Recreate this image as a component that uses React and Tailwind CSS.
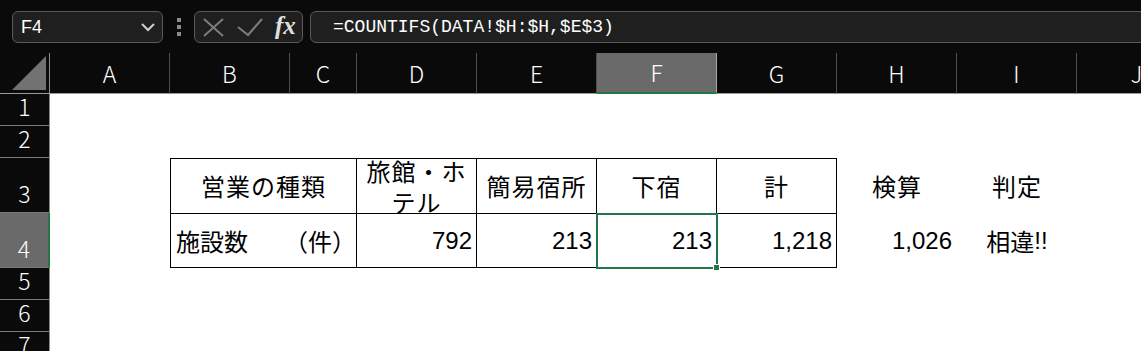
import React from 'react';

const cols = ['A', 'B', 'C', 'D', 'E', 'F', 'G', 'H', 'I', 'J'];
const rows = [1, 2, 3, 4, 5, 6, 7];

const colStart = [
    'col-start-2', 'col-start-3', 'col-start-4', 'col-start-5', 'col-start-6',
    'col-start-7', 'col-start-8', 'col-start-9', 'col-start-10', 'col-start-11',
];
const rowStart = ['row-start-2', 'row-start-3', 'row-start-4', 'row-start-5', 'row-start-6', 'row-start-7', 'row-start-8'];

const jp = { fontFamily: '"Noto Sans CJK JP", "Liberation Sans", sans-serif' };

function FormulaBar() {
    return (
        <div className="h-[53px] flex items-start pt-[11px] pl-[12px]">
            <div className="shrink-0 w-[151px] h-[32px] rounded-[6px] border border-[#5a5a5a] bg-[#1f1f1f] flex items-center justify-between pl-[8px] pr-[6px]">
                <span className="text-[18px] text-white font-['Liberation_Sans'] leading-none">F4</span>
                <svg width="16" height="10" viewBox="0 0 16 10">
                    <path d="M2 2 L8 8 L14 2" fill="none" stroke="#d0d0d0" strokeWidth="2" />
                </svg>
            </div>
            <div className="shrink-0 w-[31px] h-[32px] flex flex-col items-center justify-center gap-[3px]">
                <div className="w-[4px] h-[4px] bg-[#8a8a8a]" />
                <div className="w-[4px] h-[4px] bg-[#8a8a8a]" />
                <div className="w-[4px] h-[4px] bg-[#8a8a8a]" />
            </div>
            <div className="shrink-0 w-[109px] h-[32px] rounded-[6px] border border-[#5a5a5a] bg-[#1f1f1f] flex items-center">
                <svg width="80" height="32" viewBox="0 0 80 32" className="shrink-0">
                    <path d="M9 8 L28 25 M28 8 L9 25" stroke="#7c7c7c" strokeWidth="2" fill="none" />
                    <path d="M43 16 L53 24 L67 8" stroke="#7c7c7c" strokeWidth="2" fill="none" />
                </svg>
                <span className="text-[25px] italic text-[#e0e0e0] font-['Liberation_Serif'] font-bold leading-none -mt-[3px]">fx</span>
            </div>
            <div className="shrink-0 ml-[7px] w-[900px] h-[32px] rounded-[6px] border border-[#5a5a5a] bg-[#1f1f1f] flex items-center pl-[22px]">
                <span className="text-[18px] text-white font-['Liberation_Mono'] leading-none">=COUNTIFS(DATA!$H:$H,$E$3)</span>
            </div>
        </div>
    );
}

function Sheet() {
    return (
        <div className="grid grid-cols-[50px_120px_120px_67px_120px_120px_120px_120px_120px_120px_120px] grid-rows-[41px_32px_32px_55px_55px_32px_32px_32px]">
            {/* corner */}
            <div className="col-start-1 row-start-1 border-b border-b-[#9a9a9a] border-r border-r-[#8a8a8a] flex items-end justify-end pr-[2px] pb-[2px]">
                <svg width="36" height="36" viewBox="0 0 36 36">
                    <path d="M1 35 L35 35 L35 1 Z" fill="#727272" />
                </svg>
            </div>

            {/* column headers */}
            {cols.map((c, i) => (
                <div
                    key={c}
                    className={`${colStart[i]} row-start-1 flex items-center justify-center text-[23px] font-light text-white ${
                        c === 'F'
                            ? 'bg-[#6a6a6a] border-r border-r-[#a8a8a8] border-b-2 border-b-[#21794a]'
                            : 'border-r border-r-[#4e4e4e] border-b border-b-[#9a9a9a]'
                    }`}
                    style={jp}
                >
                    {c}
                </div>
            ))}

            {/* row headers */}
            {rows.map((r, i) => (
                <div
                    key={r}
                    className={`col-start-1 ${rowStart[i]} flex items-end justify-center pb-[7px] text-[23px] font-light text-white leading-none border-b border-b-[#7a7a7a] ${
                        r === 4 ? 'bg-[#6a6a6a] border-r-2 border-r-[#21794a]' : 'border-r border-r-[#8a8a8a]'
                    }`}
                    style={jp}
                >
                    {r}
                </div>
            ))}

            {/* cell area */}
            <div className="col-start-2 col-span-10 row-start-2 row-span-7 bg-white" />

            {/* row 3 */}
            <div className="col-start-3 col-span-2 row-start-4 border-l border-t border-r border-black flex items-center justify-center text-[24px] tracking-[1px] text-black" style={jp}>
                営業の種類
            </div>
            <div className="col-start-5 row-start-4 border-t border-r border-black flex items-center justify-center text-center text-[24px] leading-[31px] tracking-[1px] text-black px-[3px]" style={jp}>
                旅館・ホテル
            </div>
            <div className="col-start-6 row-start-4 border-t border-r border-black flex items-center justify-center text-[24px] tracking-[1px] text-black" style={jp}>
                簡易宿所
            </div>
            <div className="col-start-7 row-start-4 border-t border-r border-black flex items-center justify-center text-[24px] tracking-[1px] text-black" style={jp}>
                下宿
            </div>
            <div className="col-start-8 row-start-4 border-t border-r border-black flex items-center justify-center text-[24px] tracking-[1px] text-black" style={jp}>
                計
            </div>
            <div className="col-start-9 row-start-4 flex items-center justify-center text-[24px] tracking-[1px] text-black" style={jp}>
                検算
            </div>
            <div className="col-start-10 row-start-4 flex items-center justify-center text-[24px] tracking-[1px] text-black" style={jp}>
                判定
            </div>

            {/* row 4 */}
            <div className="col-start-3 col-span-2 row-start-5 border-l border-t border-b border-r border-black flex items-center justify-between pl-[5px] pr-[0px] text-[24px] text-black" style={jp}>
                <span>施設数</span>
                <span>（件）</span>
            </div>
            <div className="col-start-5 row-start-5 border-t border-b border-r border-black flex items-center justify-end pr-[4px] text-[24px] text-black font-['Liberation_Sans']">
                792
            </div>
            <div className="col-start-6 row-start-5 border-t border-b border-r border-black flex items-center justify-end pr-[4px] text-[24px] text-black font-['Liberation_Sans']">
                213
            </div>
            <div className="col-start-7 row-start-5 relative border-t border-b border-r border-black flex items-center justify-end pr-[4px] text-[24px] text-black font-['Liberation_Sans']">
                213
                <div className="absolute -left-[1px] -top-[1px] -right-[2px] -bottom-[2px] border-2 border-[#21794a]" />
                <div className="absolute -right-[4px] -bottom-[4px] w-[7px] h-[7px] bg-[#21794a] border border-white" />
            </div>
            <div className="col-start-8 row-start-5 border-t border-b border-r border-black flex items-center justify-end pr-[4px] text-[24px] text-black font-['Liberation_Sans']">
                1,218
            </div>
            <div className="col-start-9 row-start-5 flex items-center justify-end pr-[5px] text-[24px] text-black font-['Liberation_Sans']">
                1,026
            </div>
            <div className="col-start-10 row-start-5 flex items-center justify-center text-[24px] text-black" style={jp}>
                相違<span className="font-['Liberation_Sans']">!!</span>
            </div>
        </div>
    );
}

export default function App() {
    return (
        <div className="w-[1141px] h-[351px] overflow-hidden bg-[#0a0a0a]">
            <FormulaBar />
            <Sheet />
        </div>
    );
}
